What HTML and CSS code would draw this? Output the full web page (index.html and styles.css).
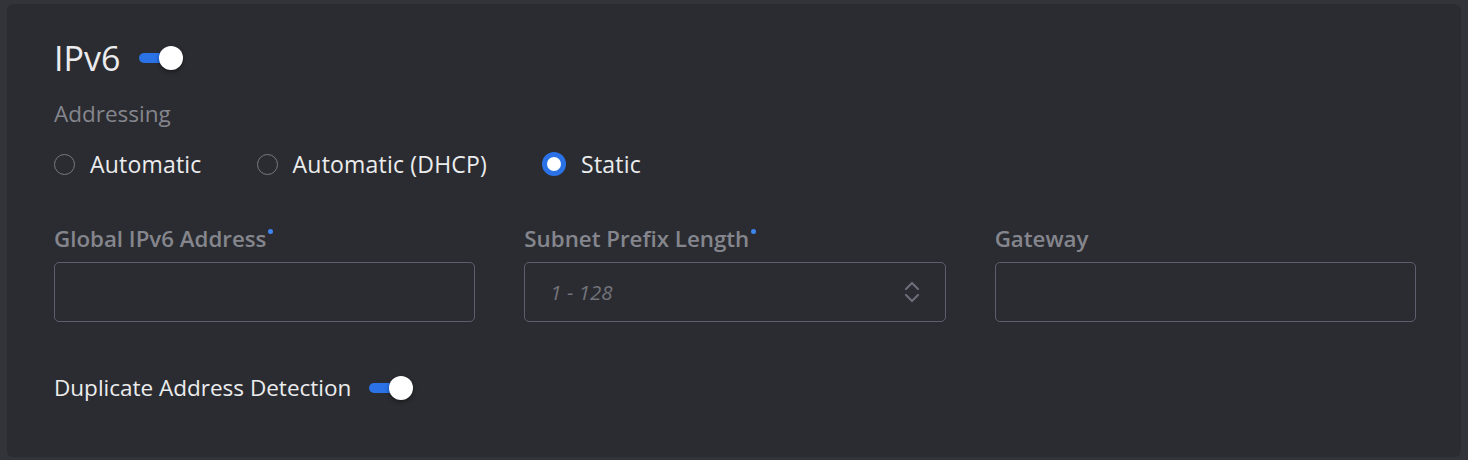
FILE: index.html
```html
<!DOCTYPE html>
<html lang="en">
<head>
    <meta charset="UTF-8">
    <title>IPv6</title>
    <link rel="stylesheet" href="styles.css">
</head>
<body>
    <div class="panel">
        <div class="section-head">
            <h2 class="section-title">IPv6</h2>
            <span class="toggle on"><span class="knob"></span></span>
        </div>

        <div class="group-label">Addressing</div>
        <div class="radio-row">
            <label class="radio"><span class="radio-dot"></span>Automatic</label>
            <label class="radio"><span class="radio-dot"></span>Automatic (DHCP)</label>
            <label class="radio checked"><span class="radio-dot"></span>Static</label>
        </div>

        <div class="field-grid">
            <div class="field">
                <div class="field-label required">Global IPv6 Address</div>
                <div class="field-input"></div>
            </div>
            <div class="field">
                <div class="field-label required">Subnet Prefix Length</div>
                <div class="field-input">
                    <span class="placeholder">1 - 128</span>
                    <svg class="spinner" width="16" height="24" viewBox="0 0 16 24">
                        <path d="M2 9 L8 3 L14 9" fill="none" stroke="#6b6c78" stroke-width="2.2" stroke-linecap="round" stroke-linejoin="round"/>
                        <path d="M2 15 L8 21 L14 15" fill="none" stroke="#6b6c78" stroke-width="2.2" stroke-linecap="round" stroke-linejoin="round"/>
                    </svg>
                </div>
            </div>
            <div class="field">
                <div class="field-label">Gateway</div>
                <div class="field-input"></div>
            </div>
        </div>

        <div class="switch-row">
            <span class="switch-label">Duplicate Address Detection</span>
            <span class="toggle on"><span class="knob"></span></span>
        </div>
    </div>
</body>
</html>
```

FILE: styles.css
```css
:root {
    --page-bg: #333439;
    --panel-bg: #2b2c31;
    --text: #ececee;
    --muted: #85868d;
    --border: #5e5f6c;
    --blue: #2a72e6;
}

body {
    margin: 0;
    padding: 4px 7px 3px 7px;
    background: var(--page-bg);
    font-family: "Open Sans", "Lato", sans-serif;
    color: var(--text);
}

.panel {
    background: var(--panel-bg);
    border-radius: 6px;
    padding: 37px 45px 0 47px;
    height: 416px;
}

.section-head {
    display: flex;
    align-items: center;
    gap: 19px;
    height: 34px;
}

.section-title {
    margin: 0;
    font-size: 34px;
    font-weight: 400;
    line-height: 34px;
}

.toggle {
    position: relative;
    display: inline-block;
    width: 32px;
    height: 10px;
    border-radius: 5px;
    background: var(--blue);
}

.toggle .knob {
    position: absolute;
    right: -12px;
    top: -7px;
    width: 24px;
    height: 24px;
    border-radius: 50%;
    background: #fff;
    box-shadow: 0 2px 4px rgba(0, 0, 0, 0.4);
}

.group-label {
    margin-top: 27px;
    font-size: 22.5px;
    font-weight: 500;
    line-height: 24px;
    color: var(--muted);
}

.radio-row {
    display: flex;
    gap: 55px;
    margin-top: 25px;
    height: 26px;
    align-items: center;
}

.radio {
    display: flex;
    align-items: center;
    gap: 15px;
    font-size: 23px;
    font-weight: 500;
    letter-spacing: 0.2px;
}

.radio-dot {
    width: 19px;
    height: 19px;
    border: 1.5px solid #7a7b82;
    border-radius: 50%;
}

.radio.checked .radio-dot {
    width: 14px;
    height: 14px;
    border: 5px solid var(--blue);
    background: #fff;
}

.field-grid {
    display: grid;
    grid-template-columns: repeat(3, 1fr);
    gap: 49px;
    margin-top: 50px;
}

.field-label {
    font-size: 22.3px;
    font-weight: 600;
    line-height: 24px;
    color: var(--muted);
    margin-bottom: 11px;
}

.field-label.required::after {
    content: "";
    display: inline-block;
    width: 5px;
    height: 5px;
    margin-left: 2px;
    border-radius: 50%;
    background: #3d86f2;
    vertical-align: 13px;
}

.field-input {
    box-sizing: border-box;
    height: 60px;
    border: 1px solid var(--border);
    border-radius: 5px;
    display: flex;
    align-items: center;
    justify-content: space-between;
    padding: 0 25px 0 25px;
}

.placeholder {
    font-style: italic;
    font-size: 20.5px;
    color: #72737a;
}

.switch-row {
    display: flex;
    align-items: center;
    gap: 18px;
    margin-top: 50px;
}

.switch-label {
    font-size: 22.5px;
    font-weight: 500;
}
```
